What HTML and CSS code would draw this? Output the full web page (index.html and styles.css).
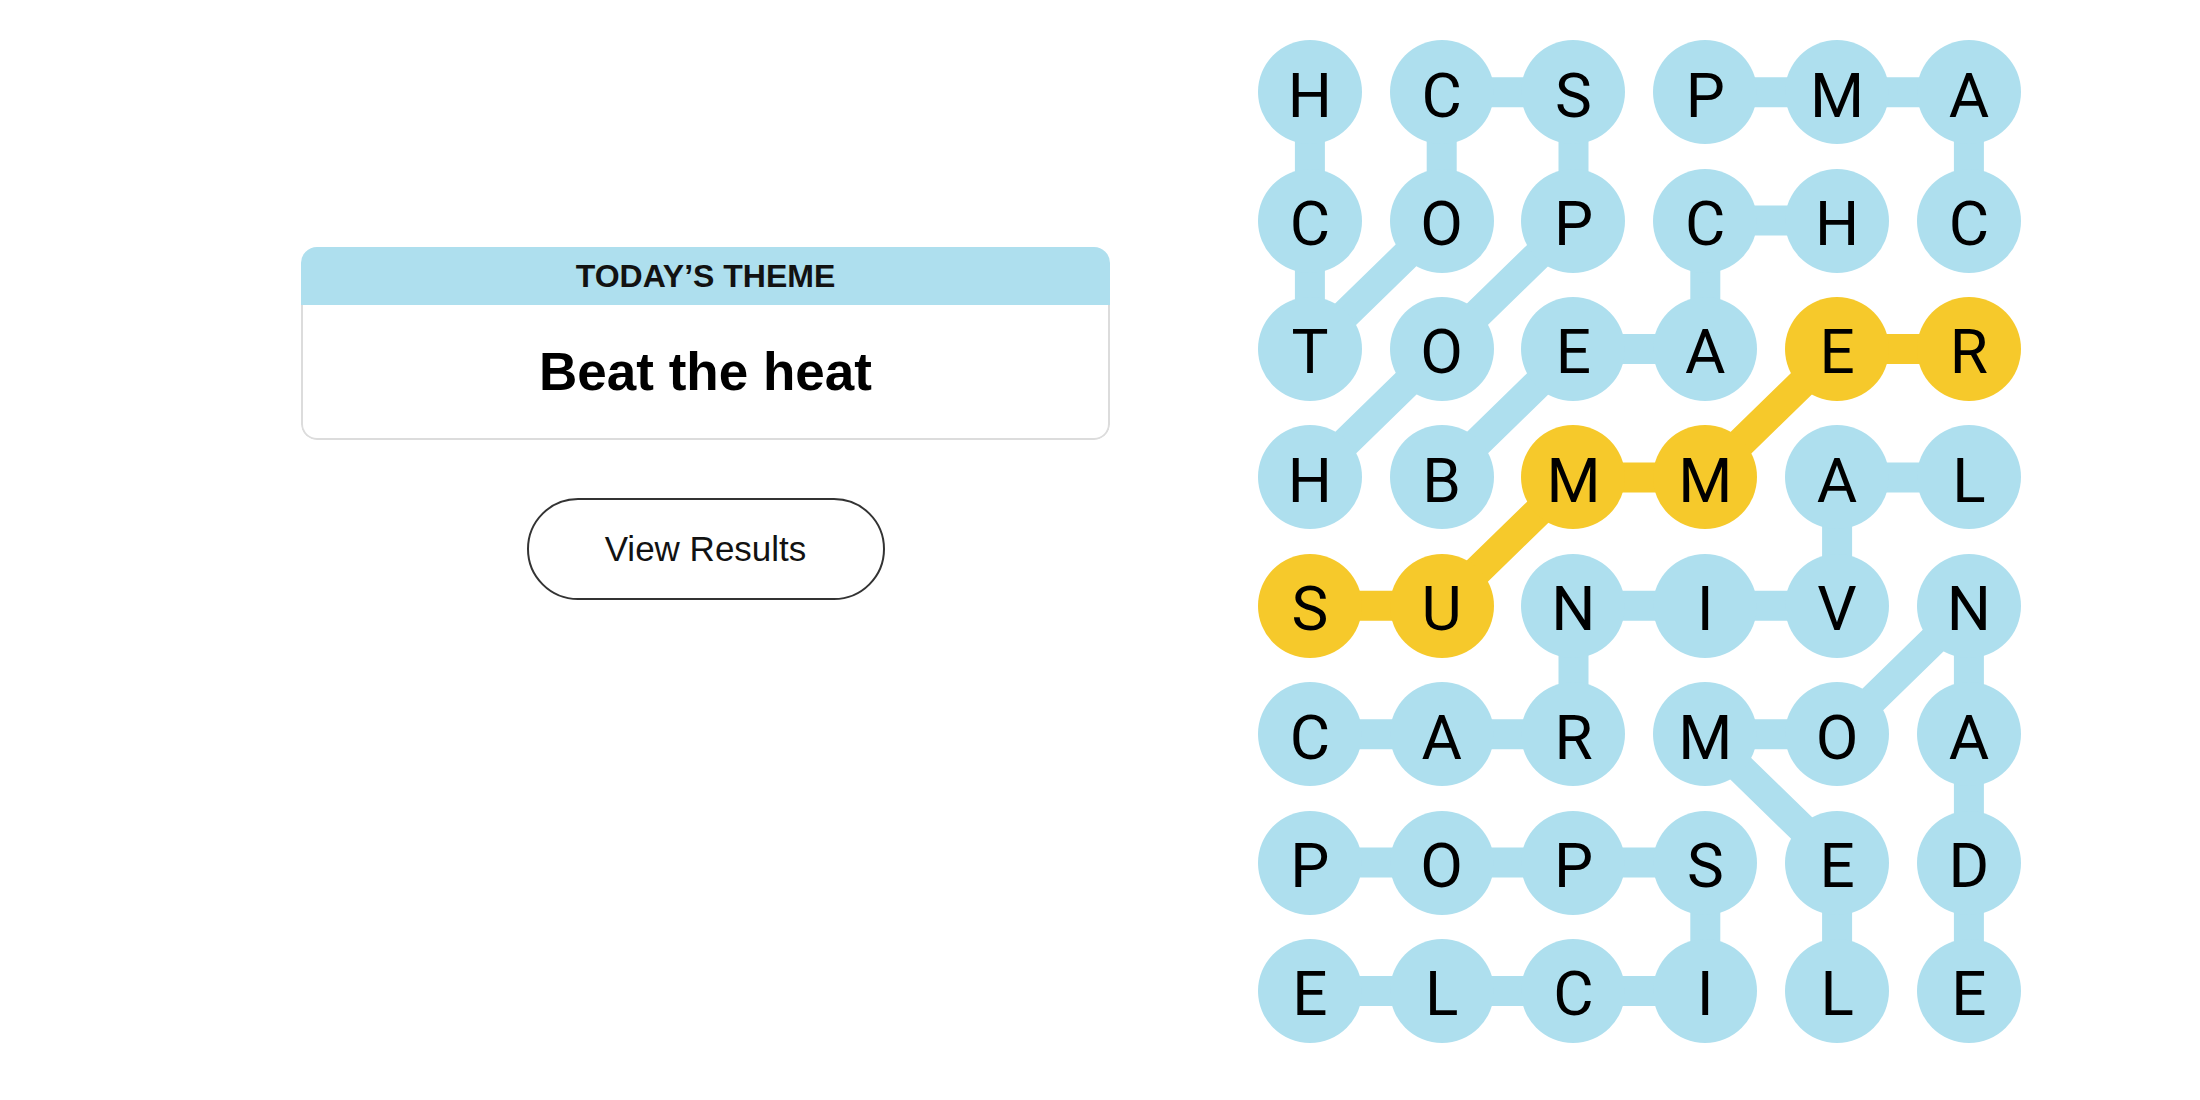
FILE: index.html
```html
<!DOCTYPE html>
<html lang="en">
<head>
<meta charset="utf-8">
<title>Strands</title>
<link rel="stylesheet" href="styles.css">
</head>
<body>
<main class="page">
  <section class="left">
    <div class="card">
      <div class="card-head">TODAY’S THEME</div>
      <div class="card-body">Beat the heat</div>
    </div>
    <button class="btn">View Results</button>
  </section>
  <section class="board">
    <svg class="links" viewBox="0 0 790.8 1027.2" width="790.8" height="1027.2">
      <g fill="none" stroke="#aedfee" stroke-width="30" stroke-linejoin="round">
        <polyline points="65.9,449.4 197.7,321 329.5,192.6 329.5,64.2 197.7,64.2 197.7,192.6 65.9,321 65.9,192.6 65.9,64.2"/>
        <polyline points="197.7,449.4 329.5,321 461.3,321 461.3,192.6 593.1,192.6"/>
        <polyline points="724.9,192.6 724.9,64.2 593.1,64.2 461.3,64.2"/>
        <polyline points="65.9,706.2 197.7,706.2 329.5,706.2 329.5,577.8 461.3,577.8 593.1,577.8 593.1,449.4 724.9,449.4"/>
        <polyline points="593.1,963 593.1,834.6 461.3,706.2 593.1,706.2 724.9,577.8 724.9,706.2 724.9,834.6 724.9,963"/>
        <polyline points="65.9,834.6 197.7,834.6 329.5,834.6 461.3,834.6 461.3,963 329.5,963 197.7,963 65.9,963"/>
      </g>
      <polyline fill="none" stroke="#f6c92b" stroke-width="30" stroke-linejoin="round" points="65.9,577.8 197.7,577.8 329.5,449.4 461.3,449.4 593.1,321 724.9,321"/>
    </svg>
    <div class="grid">
      <div class="cell"><span class="dot">H</span></div>
      <div class="cell"><span class="dot">C</span></div>
      <div class="cell"><span class="dot">S</span></div>
      <div class="cell"><span class="dot">P</span></div>
      <div class="cell"><span class="dot">M</span></div>
      <div class="cell"><span class="dot">A</span></div>

      <div class="cell"><span class="dot">C</span></div>
      <div class="cell"><span class="dot">O</span></div>
      <div class="cell"><span class="dot">P</span></div>
      <div class="cell"><span class="dot">C</span></div>
      <div class="cell"><span class="dot">H</span></div>
      <div class="cell"><span class="dot">C</span></div>

      <div class="cell"><span class="dot">T</span></div>
      <div class="cell"><span class="dot">O</span></div>
      <div class="cell"><span class="dot">E</span></div>
      <div class="cell"><span class="dot">A</span></div>
      <div class="cell"><span class="dot span">E</span></div>
      <div class="cell"><span class="dot span">R</span></div>

      <div class="cell"><span class="dot">H</span></div>
      <div class="cell"><span class="dot">B</span></div>
      <div class="cell"><span class="dot span">M</span></div>
      <div class="cell"><span class="dot span">M</span></div>
      <div class="cell"><span class="dot">A</span></div>
      <div class="cell"><span class="dot">L</span></div>

      <div class="cell"><span class="dot span">S</span></div>
      <div class="cell"><span class="dot span">U</span></div>
      <div class="cell"><span class="dot">N</span></div>
      <div class="cell"><span class="dot">I</span></div>
      <div class="cell"><span class="dot">V</span></div>
      <div class="cell"><span class="dot">N</span></div>

      <div class="cell"><span class="dot">C</span></div>
      <div class="cell"><span class="dot">A</span></div>
      <div class="cell"><span class="dot">R</span></div>
      <div class="cell"><span class="dot">M</span></div>
      <div class="cell"><span class="dot">O</span></div>
      <div class="cell"><span class="dot">A</span></div>

      <div class="cell"><span class="dot">P</span></div>
      <div class="cell"><span class="dot">O</span></div>
      <div class="cell"><span class="dot">P</span></div>
      <div class="cell"><span class="dot">S</span></div>
      <div class="cell"><span class="dot">E</span></div>
      <div class="cell"><span class="dot">D</span></div>

      <div class="cell"><span class="dot">E</span></div>
      <div class="cell"><span class="dot">L</span></div>
      <div class="cell"><span class="dot">C</span></div>
      <div class="cell"><span class="dot">I</span></div>
      <div class="cell"><span class="dot">L</span></div>
      <div class="cell"><span class="dot">E</span></div>
    </div>
  </section>
</main>
</body>
</html>
```

FILE: styles.css
```css
* { box-sizing: border-box; }

html, body {
  margin: 0;
  background: #ffffff;
  color: #000000;
  font-family: "Liberation Sans", Arial, sans-serif;
}

.page {
  display: flex;
  align-items: flex-start;
  gap: 134px;
  padding: 28px 0 0 301px;
}

.left {
  width: 809px;
  margin-top: 219px;
  display: flex;
  flex-direction: column;
  align-items: center;
}

.card {
  width: 809px;
  border-radius: 16px;
  overflow: hidden;
}

.card-head {
  height: 58px;
  background: #aedfee;
  display: flex;
  align-items: center;
  justify-content: center;
  font-size: 32px;
  font-weight: 700;
  color: #121212;
}

.card-body {
  height: 135px;
  border: 2px solid #dcdcdc;
  border-top: none;
  border-radius: 0 0 16px 16px;
  display: flex;
  align-items: center;
  justify-content: center;
  font-size: 53px;
  font-weight: 700;
  color: #000000;
}

.btn {
  margin-top: 58px;
  width: 358px;
  height: 102px;
  border: 2px solid #333333;
  border-radius: 51px;
  background: #ffffff;
  font-family: "Liberation Sans", Arial, sans-serif;
  font-size: 35px;
  color: #121212;
  padding: 0;
}

.board {
  position: relative;
  width: 790.8px;
  height: 1027.2px;
}

.links {
  position: absolute;
  left: 0;
  top: 0;
}

.grid {
  position: relative;
  display: grid;
  grid-template-columns: repeat(6, 131.8px);
  grid-template-rows: repeat(8, 128.4px);
}

.cell {
  display: flex;
  align-items: center;
  justify-content: center;
}

.dot {
  width: 104px;
  height: 104px;
  border-radius: 50%;
  background: #aedfee;
  display: flex;
  align-items: center;
  justify-content: center;
  padding-top: 6px;
  font-family: Roboto, "Liberation Sans", sans-serif;
  font-weight: 400;
  font-size: 62px;
  color: #000000;
}

.dot.span {
  background: #f6c92b;
}
```
